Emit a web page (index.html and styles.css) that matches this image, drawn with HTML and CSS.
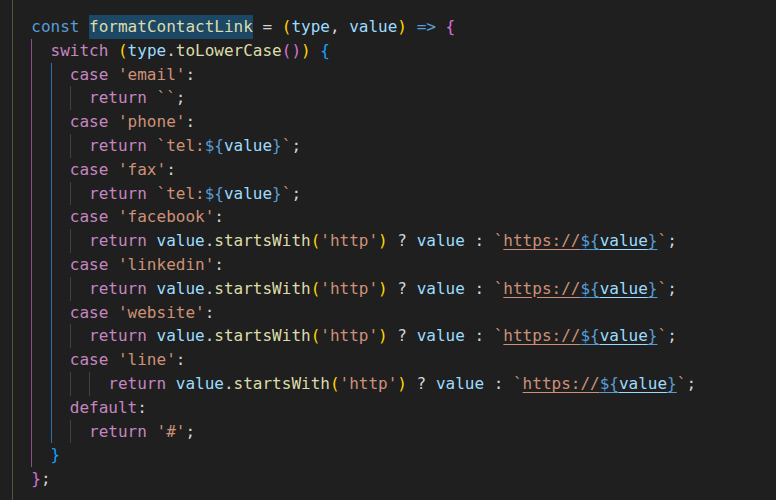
FILE: index.html
```html
<!DOCTYPE html>
<html>
<head>
<meta charset="utf-8">
<link rel="stylesheet" href="styles.css">
</head>
<body>
<div class="editor">
<div class="ln">  <span class="kw">const</span> <span class="hl fn">formatContactLink</span> = <span class="b1">(</span><span class="var">type</span>, <span class="var">value</span><span class="b1">)</span> <span class="kw">=&gt;</span> <span class="b2">{</span></div>
<div class="ln">  <span class="g gp">  </span><span class="ctl">switch</span> <span class="b1">(</span><span class="var">type</span>.<span class="fn">toLowerCase</span><span class="b2">()</span><span class="b1">)</span> <span class="b3">{</span></div>
<div class="ln">  <span class="g gp">  </span><span class="g gb">  </span><span class="ctl">case</span> <span class="str">'email'</span>:</div>
<div class="ln">  <span class="g gp">  </span><span class="g gb">  </span><span class="g gg">  </span><span class="ctl">return</span> <span class="str">``</span>;</div>
<div class="ln">  <span class="g gp">  </span><span class="g gb">  </span><span class="ctl">case</span> <span class="str">'phone'</span>:</div>
<div class="ln">  <span class="g gp">  </span><span class="g gb">  </span><span class="g gg">  </span><span class="ctl">return</span> <span class="str">`tel:</span><span class="kw">${</span><span class="var">value</span><span class="kw">}</span><span class="str">`</span>;</div>
<div class="ln">  <span class="g gp">  </span><span class="g gb">  </span><span class="ctl">case</span> <span class="str">'fax'</span>:</div>
<div class="ln">  <span class="g gp">  </span><span class="g gb">  </span><span class="g gg">  </span><span class="ctl">return</span> <span class="str">`tel:</span><span class="kw">${</span><span class="var">value</span><span class="kw">}</span><span class="str">`</span>;</div>
<div class="ln">  <span class="g gp">  </span><span class="g gb">  </span><span class="ctl">case</span> <span class="str">'facebook'</span>:</div>
<div class="ln">  <span class="g gp">  </span><span class="g gb">  </span><span class="g gg">  </span><span class="ctl">return</span> <span class="var">value</span>.<span class="fn">startsWith</span><span class="b1">(</span><span class="str">'http'</span><span class="b1">)</span> ? <span class="var">value</span> : <span class="str">`</span><span class="str u">https://</span><span class="kw u">${</span><span class="var u">value</span><span class="kw u">}</span><span class="str">`</span>;</div>
<div class="ln">  <span class="g gp">  </span><span class="g gb">  </span><span class="ctl">case</span> <span class="str">'linkedin'</span>:</div>
<div class="ln">  <span class="g gp">  </span><span class="g gb">  </span><span class="g gg">  </span><span class="ctl">return</span> <span class="var">value</span>.<span class="fn">startsWith</span><span class="b1">(</span><span class="str">'http'</span><span class="b1">)</span> ? <span class="var">value</span> : <span class="str">`</span><span class="str u">https://</span><span class="kw u">${</span><span class="var u">value</span><span class="kw u">}</span><span class="str">`</span>;</div>
<div class="ln">  <span class="g gp">  </span><span class="g gb">  </span><span class="ctl">case</span> <span class="str">'website'</span>:</div>
<div class="ln">  <span class="g gp">  </span><span class="g gb">  </span><span class="g gg">  </span><span class="ctl">return</span> <span class="var">value</span>.<span class="fn">startsWith</span><span class="b1">(</span><span class="str">'http'</span><span class="b1">)</span> ? <span class="var">value</span> : <span class="str">`</span><span class="str u">https://</span><span class="kw u">${</span><span class="var u">value</span><span class="kw u">}</span><span class="str">`</span>;</div>
<div class="ln">  <span class="g gp">  </span><span class="g gb">  </span><span class="ctl">case</span> <span class="str">'line'</span>:</div>
<div class="ln">  <span class="g gp">  </span><span class="g gb">  </span><span class="g gg">  </span><span class="g gg">  </span><span class="ctl">return</span> <span class="var">value</span>.<span class="fn">startsWith</span><span class="b1">(</span><span class="str">'http'</span><span class="b1">)</span> ? <span class="var">value</span> : <span class="str">`</span><span class="str u">https://</span><span class="kw u">${</span><span class="var u">value</span><span class="kw u">}</span><span class="str">`</span>;</div>
<div class="ln">  <span class="g gp">  </span><span class="g gb">  </span><span class="ctl">default</span>:</div>
<div class="ln">  <span class="g gp">  </span><span class="g gb">  </span><span class="g gg">  </span><span class="ctl">return</span> <span class="str">'#'</span>;</div>
<div class="ln">  <span class="g gp">  </span><span class="b3">}</span></div>
<div class="ln">  <span class="b2">}</span>;</div>
</div>
</body>
</html>
```
FILE: styles.css
```css
html, body {
  margin: 0;
  padding: 0;
  background: #1f1f1f;
}
.editor {
  height: 500px;
  box-sizing: border-box;
  padding: 15px 0 0 12px;
  font-family: "DejaVu Sans Mono", monospace;
  font-size: 16px;
  color: #d4d4d4;
  background-image: linear-gradient(#5b5430, #5b5430);
  background-repeat: no-repeat;
  background-position: 12px 0;
  background-size: 1px 100%;
}
.ln {
  white-space: pre;
  height: 23.8px;
  line-height: 23.8px;
}
.g {
  display: inline-block;
  height: 23.8px;
  vertical-align: top;
}
.gp { box-shadow: inset 1px 0 0 #8a4f88; }
.gb { box-shadow: inset 1px 0 0 #2f6fa8; }
.gg { box-shadow: inset 1px 0 0 #404040; }
.hl {
  display: inline-block;
  height: 23.8px;
  vertical-align: top;
  background: #1c4866;
}
.kw { color: #569cd6; }
.ctl { color: #c586c0; }
.fn { color: #dcdcaa; }
.var { color: #9cdcfe; }
.str { color: #ce9178; }
.b1 { color: #ffd700; }
.b2 { color: #da70d6; }
.b3 { color: #179fff; }
.u {
  text-decoration: underline;
  text-underline-offset: 3px;
}
```
